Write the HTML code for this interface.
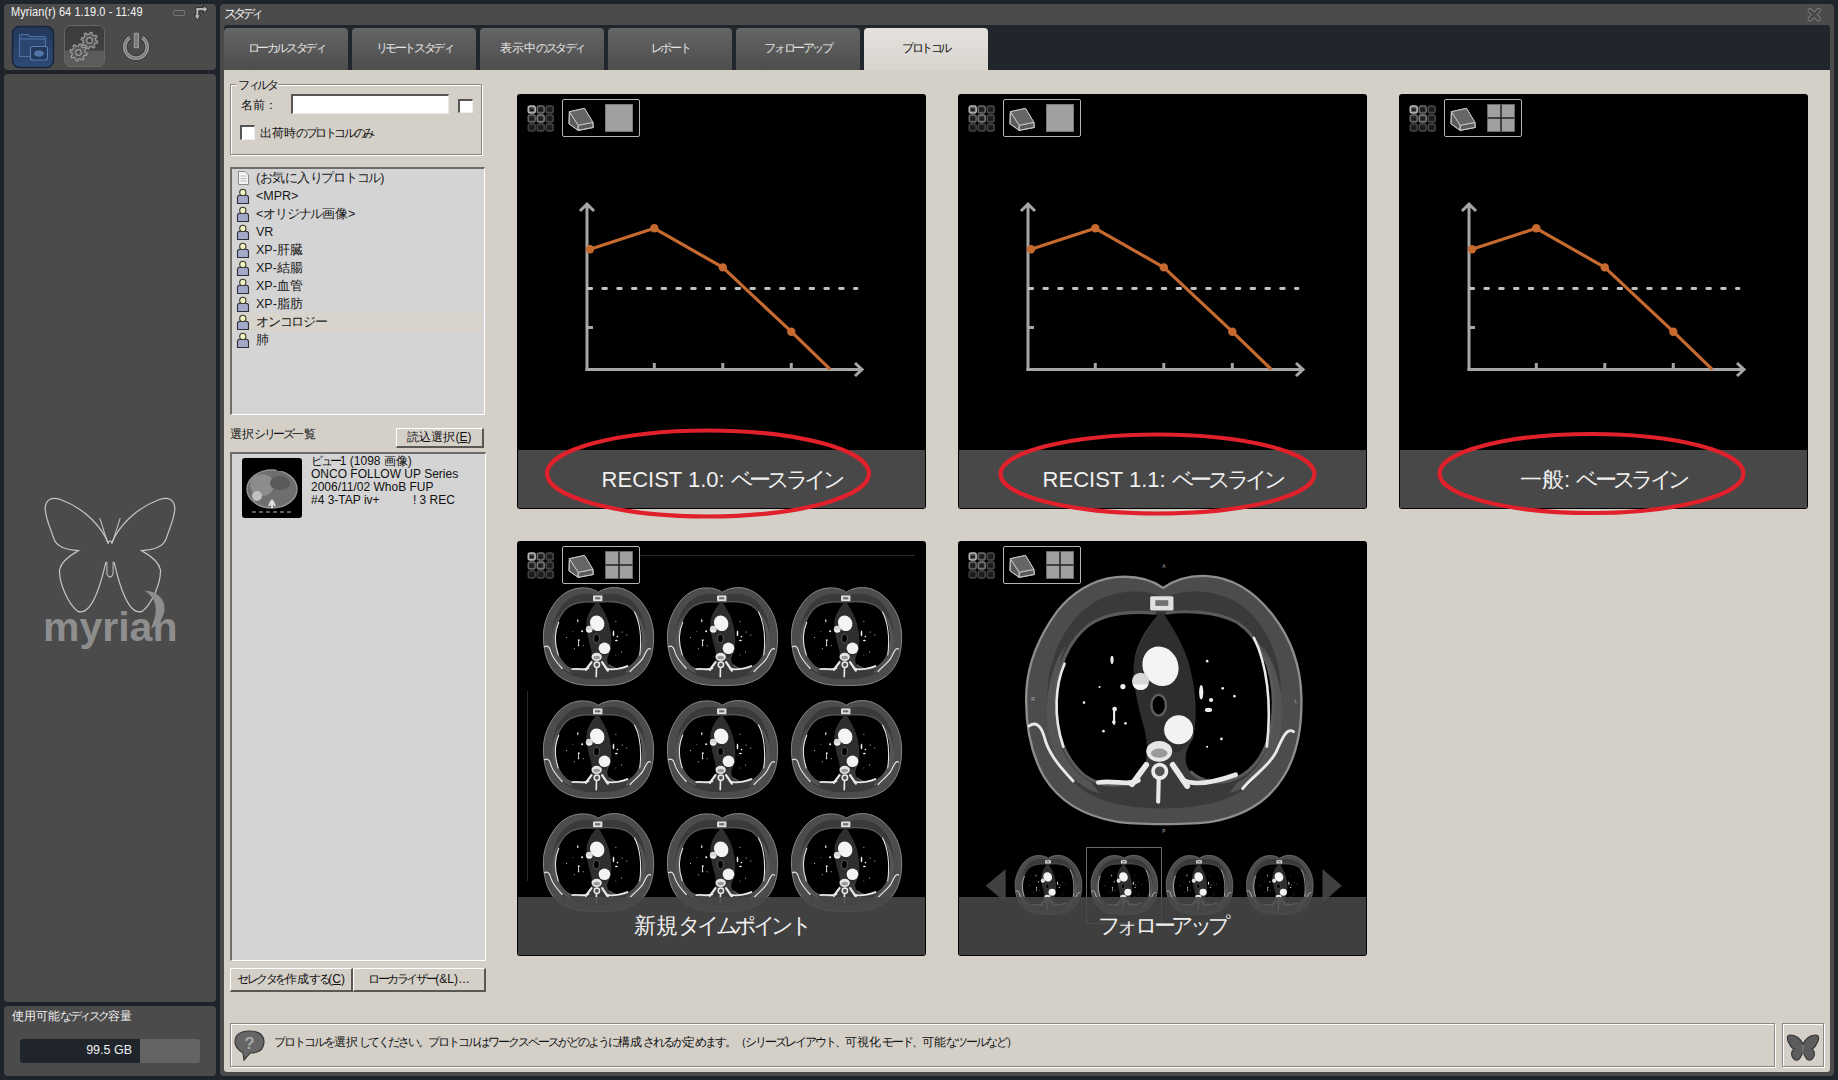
<!DOCTYPE html>
<html><head><meta charset="utf-8">
<style>
*{margin:0;padding:0;box-sizing:border-box}
html,body{width:1838px;height:1080px;overflow:hidden;background:#1f232a;font-family:"Liberation Sans",sans-serif}
.a{position:absolute}
.panel{position:absolute;background:#4b4b4b;border-radius:4px}
.tab{position:absolute;top:28px;width:124px;height:42px;border-radius:4px 4px 0 0;background:linear-gradient(180deg,#666 0%,#5a5a5a 45%,#4d4d4d 100%);color:#e6e6e6;font-size:12px;text-align:center;line-height:40px}
.tab.sel{background:linear-gradient(180deg,#e4e2dd 0%,#d8d5cf 100%);color:#111}
.etch{position:absolute;border:1px solid #8a8782;box-shadow:inset 1px 1px 0 #fff,1px 1px 0 #fff}
.sunk{position:absolute;background:#d4d4d4;border-top:2px solid #6e6c68;border-left:2px solid #6e6c68;border-right:1px solid #fff;border-bottom:1px solid #fff}
.btn{position:absolute;white-space:nowrap;background:#d4d0c8;border-top:1px solid #fff;border-left:1px solid #fff;border-right:2px solid #5a5854;border-bottom:2px solid #5a5854;font-size:12px;color:#111;text-align:center}
.card{position:absolute;width:409px;height:415px;background:#000;border-radius:3px;overflow:hidden}
.cap{position:absolute;left:1px;right:1px;bottom:1px;height:58px;background:rgba(72,72,72,.97);color:#f2f2f2;font-size:22px;text-align:center;line-height:60px}
.li{position:absolute;left:256px;font-size:12.5px;color:#1a1a1a;height:18px;line-height:18px}
.k{letter-spacing:-0.2em}
.k3{letter-spacing:-0.1em}
.k2{letter-spacing:-0.168em}
</style></head><body>
<!-- left sidebar -->
<div class="panel" style="left:4px;top:4px;width:212px;height:66px"></div>
<div class="panel" style="left:4px;top:74px;width:212px;height:928px"></div>
<div class="panel" style="left:4px;top:1006px;width:212px;height:70px"></div>

<div class="a" style="left:11px;top:5px;color:#f4f4f4;font-size:12px;letter-spacing:0.1px;transform:scaleX(0.915);transform-origin:0 0;white-space:nowrap">Myrian(r) 64 1.19.0 - 11:49</div>
<svg class="a" style="left:0;top:0" width="220" height="1080">
 <rect x="173.5" y="10.5" width="11" height="5" rx="1" fill="none" stroke="#777" stroke-width="1"/>
 <path d="M195.8,15 L194,15 L197.3,20.2 L200.6,15 L198.8,15 L198.8,10.8 L203.5,10.8 L203.5,13 L208,9.2 L203.5,5.5 L203.5,7.5 L195.8,7.5 Z" fill="#b4b4b4" stroke="#262626" stroke-width="0.9" stroke-linejoin="round"/>
 <defs>
  <linearGradient id="fg" x1="0" y1="0" x2="0" y2="1"><stop offset="0" stop-color="#22375a"/><stop offset="1" stop-color="#2e4a74"/></linearGradient>
  <linearGradient id="gg" x1="0" y1="0" x2="0" y2="1"><stop offset="0" stop-color="#3c3c3c"/><stop offset="0.6" stop-color="#404040"/><stop offset="0.62" stop-color="#5a5a5a"/><stop offset="1" stop-color="#5c5c5c"/></linearGradient>
 </defs>
 <rect x="12.5" y="26.5" width="41" height="41" rx="7" fill="url(#fg)" stroke="#18243a" stroke-width="1.5"/>
 <path d="M19.5,56.5 V36 Q19.5,34.5 21,34.5 H28 L30,36.5 H44 Q45.5,36.5 45.5,38 V56.5 Z" fill="#2c4670" stroke="#4f72a6" stroke-width="1.1"/>
 <path d="M19.5,39 H45.5" stroke="#4f72a6" stroke-width="1.1"/>
 <rect x="30.5" y="46.5" width="17" height="13.5" rx="2" fill="#22385a" stroke="#5a7fb5" stroke-width="1.1"/>
 <ellipse cx="39" cy="53.5" rx="5" ry="3.3" fill="#4f74a8"/>
 <rect x="64.5" y="25.5" width="40" height="41" rx="6" fill="url(#gg)" stroke="#666" stroke-width="1"/>
 <g fill="none" stroke="#9a9a9a" stroke-width="1.2">
  <path d="M95.90,40.50 L97.76,41.28 L97.35,43.19 L95.33,43.13 L94.03,45.03 L94.79,46.90 L93.15,47.95 L91.76,46.49 L89.50,46.90 L88.72,48.76 L86.81,48.35 L86.87,46.33 L84.97,45.03 L83.10,45.79 L82.05,44.15 L83.51,42.76 L83.10,40.50 L81.24,39.72 L81.65,37.81 L83.67,37.87 L84.97,35.97 L84.21,34.10 L85.85,33.05 L87.24,34.51 L89.50,34.10 L90.28,32.24 L92.19,32.65 L92.13,34.67 L94.03,35.97 L95.90,35.21 L96.95,36.85 L95.49,38.24 Z" fill="#575757"/><circle cx="89.5" cy="40.5" r="2.8" fill="#404040"/>
  <path d="M85.10,52.50 L87.06,53.31 L86.64,55.29 L84.52,55.22 L83.17,57.17 L83.98,59.13 L82.28,60.22 L80.83,58.67 L78.50,59.10 L77.69,61.06 L75.71,60.64 L75.78,58.52 L73.83,57.17 L71.87,57.98 L70.78,56.28 L72.33,54.83 L71.90,52.50 L69.94,51.69 L70.36,49.71 L72.48,49.78 L73.83,47.83 L73.02,45.87 L74.72,44.78 L76.17,46.33 L78.50,45.90 L79.31,43.94 L81.29,44.36 L81.22,46.48 L83.17,47.83 L85.13,47.02 L86.22,48.72 L84.67,50.17 Z" fill="#575757"/><circle cx="78.5" cy="52.5" r="2.8" fill="#505050"/>
 </g>
 <path d="M129.6,37.8 A11.2,11.2 0 1 0 142.4,37.8" fill="none" stroke="#383838" stroke-width="5.6"/>
 <path d="M129.6,37.8 A11.2,11.2 0 1 0 142.4,37.8" fill="none" stroke="#a0a0a0" stroke-width="3.8"/>
 <path d="M129.6,37.8 A11.2,11.2 0 1 0 142.4,37.8" fill="none" stroke="#707070" stroke-width="1.1"/>
 <rect x="133.2" y="32.2" width="6.2" height="16.6" fill="#383838"/>
 <rect x="134.2" y="33.2" width="4.2" height="14.6" fill="#7a7a7a" stroke="#a4a4a4" stroke-width="1"/>
 <g transform="translate(0,460) scale(0.2037)" fill="none" stroke="#c4c4c4" stroke-width="6">
  <path d="M533,410 C500,330 420,240 300,195 C250,178 225,195 222,235 C220,280 250,340 262,380 C275,430 330,440 385,445 C340,470 300,500 292,540 C290,600 330,700 380,742 C420,760 470,720 520,500"/>
  <path d="M547,410 C580,330 660,240 780,195 C830,178 855,195 858,235 C860,280 830,340 818,380 C805,430 750,440 695,445 C740,470 780,500 788,540 C790,600 750,700 700,742 C660,760 610,720 560,500"/>
  <path d="M528,405 L490,285 M552,405 L590,285" stroke-width="5"/>
  <path d="M528,410 Q540,385 552,410" />
  <path d="M525,500 L525,560 Q540,590 555,560 L555,500" stroke-width="5"/>
 </g>
 <path d="M144.6,590.4 C168,591.5 172,617 150.7,629.1 C158.5,611 158,600 144.6,590.4 Z" fill="#8e8e8e"/>
 <rect x="20" y="1039" width="180" height="24" rx="3" fill="#646464"/>
 <path d="M23,1039 H140 V1063 H23 Q20,1063 20,1060 V1042 Q20,1039 23,1039 Z" fill="#20242b"/>
</svg>
<div class="a" style="left:43px;top:604px;color:#8e8e8e;font-size:41px;font-weight:bold;letter-spacing:0px;white-space:nowrap">myrian</div>
<div class="a" style="left:12px;top:1008px;color:#f0f0f0;font-size:12px;letter-spacing:0px;white-space:nowrap">使用可能<span class="k">なディスク</span>容量</div>
<div class="a" style="left:20px;top:1043px;width:112px;text-align:right;color:#f0f0f0;font-size:12.5px;white-space:nowrap">99.5 GB</div>
<!-- right main -->
<div class="panel" style="left:220px;top:4px;width:1614px;height:1072px"></div>
<div class="a" style="left:224px;top:25px;width:1606px;height:45px;background:#21252c;border-radius:3px 3px 0 0"></div>
<div class="a" style="left:224px;top:70px;width:1606px;height:1002px;background:#d4d0c8;border-radius:0 0 3px 3px"></div>
<div class="a" style="left:224px;top:6px;color:#eee;font-size:12.5px"><span class="k" style="letter-spacing:-0.32em">スタディ</span></div>

<div class="tab" style="left:224px"><span class="k">ローカルスタディ</span></div>
<div class="tab" style="left:352px"><span class="k">リモートスタディ</span></div>
<div class="tab" style="left:480px">表示中<span class="k">のスタディ</span></div>
<div class="tab" style="left:608px"><span class="k">レポート</span></div>
<div class="tab" style="left:736px"><span class="k">フォローアップ</span></div>
<div class="tab sel" style="left:864px"><span class="k">プロトコル</span></div>

<!-- filter -->
<div class="etch" style="left:230px;top:84px;width:252px;height:71px"></div>
<div class="a" style="left:236px;top:77px;padding:0 2px;background:#d4d0c8;font-size:12px;color:#111"><span class="k">フィルタ</span></div>
<div class="a" style="left:241px;top:97px;font-size:12px;color:#111">名前<span class="k">：</span></div>
<div class="a" style="left:291px;top:94px;width:158px;height:20px;background:#fff;border-top:2px solid #555;border-left:2px solid #555;border-right:1px solid #e8e8e8;border-bottom:1px solid #e8e8e8"></div>
<div class="a" style="left:458px;top:99px;width:15px;height:14px;background:#fff;border-top:2px solid #555;border-left:2px solid #555;border-right:1px solid #eee;border-bottom:1px solid #eee"></div>
<div class="a" style="left:240px;top:125px;width:15px;height:15px;background:#fff;border-top:2px solid #555;border-left:2px solid #555;border-right:1px solid #eee;border-bottom:1px solid #eee"></div>
<div class="a" style="left:260px;top:125px;font-size:12px;color:#111">出荷時<span class="k">のプロトコルのみ</span></div>

<!-- protocol list -->
<div class="sunk" style="left:230px;top:167px;width:255px;height:248px"></div>
<div class="a" style="left:233px;top:313px;width:249px;height:18px;background:#d8d4cc"></div>
<svg class="a" style="left:0;top:0" width="1838" height="1080" viewBox="0 0 1838 1080">
<defs>
 <g id="person">
  <path d="M0.5,14.5 L0.5,8.5 Q0.5,6.2 3,6.2 L9,6.2 Q11.5,6.2 11.5,8.5 L11.5,14.5 Z" fill="#a4a8c8" stroke="#2e3040" stroke-width="1.1"/>
  <circle cx="5.8" cy="3.4" r="3.1" fill="#f2f2c4" stroke="#3a3a2a" stroke-width="1.1"/>
 </g>
 <g id="doc">
  <path d="M1.5 0.5 L8 0.5 L11.5 4 L11.5 13.5 L1.5 13.5 Z" fill="#f4f4f4" stroke="#8a8a8a"/>
  <path d="M3.5 5 H9.5 M3.5 7.5 H9.5 M3.5 10 H9.5" stroke="#bbb"/>
 </g>
</defs>
<use href="#doc" x="237" y="171"/>
<use href="#person" x="237" y="189"/>
<use href="#person" x="237" y="207"/>
<use href="#person" x="237" y="225"/>
<use href="#person" x="237" y="243"/>
<use href="#person" x="237" y="261"/>
<use href="#person" x="237" y="279"/>
<use href="#person" x="237" y="297"/>
<use href="#person" x="237" y="315"/>
<use href="#person" x="237" y="333"/>
</svg>
<div class="li" style="top:169px">(<span class="k3">お</span>気<span class="k3">に</span>入<span class="k3">りプロトコル</span>)</div>
<div class="li" style="top:187px">&lt;MPR&gt;</div>
<div class="li" style="top:205px">&lt;<span class="k3">オリジナル</span>画像&gt;</div>
<div class="li" style="top:223px">VR</div>
<div class="li" style="top:241px">XP-肝臓</div>
<div class="li" style="top:259px">XP-結腸</div>
<div class="li" style="top:277px">XP-血管</div>
<div class="li" style="top:295px">XP-脂肪</div>
<div class="li" style="top:313px"><span class="k3">オンコロジー</span></div>
<div class="li" style="top:331px">肺</div>

<div class="a" style="left:230px;top:426px;font-size:12px;color:#111">選択<span class="k">シリーズ</span>一覧</div>
<div class="btn" style="left:396px;top:428px;width:88px;height:20px;line-height:17px">読込選択(<u>E</u>)</div>
<div class="sunk" style="left:230px;top:452px;width:256px;height:509px"></div>
<div class="a" style="left:242px;top:458px;width:60px;height:60px;background:#000;border-radius:3px"></div>
<div class="a" style="left:311px;top:455px;font-size:12px;line-height:13px;color:#111;white-space:pre"><span class="k">ビュー</span>1 (1098 画像)
ONCO FOLLOW UP Series
2006/11/02 WhoB FUP
#4 3-TAP iv+          ! 3 REC</div>

<div class="btn" style="left:230px;top:968px;width:123px;height:24px;line-height:21px"><span class="k">セレクタを</span>作成<span class="k">する</span>(<u>C</u>)</div>
<div class="btn" style="left:353px;top:968px;width:133px;height:24px;line-height:21px"><span class="k">ローカライザー</span>(&amp;L)…</div>

<div class="etch" style="left:230px;top:1023px;width:1545px;height:44px"></div>
<div class="etch" style="left:1782px;top:1023px;width:42px;height:44px"></div>
<div class="a" style="left:274px;top:1034px;font-size:12px;color:#111;white-space:nowrap;letter-spacing:0.3px"><span class="k2">プロトコルを</span>選択<span class="k2">してください。プロトコルはワークスペースがどのように</span>構成<span class="k2">されるか</span>定<span class="k2">めます。（シリーズレイアウト、</span>可視化<span class="k2">モード、</span>可能<span class="k2">なツールなど）</span></div>
<svg class="a" style="left:0;top:0" width="1838" height="1080" viewBox="0 0 1838 1080">
<defs>
 <g id="hdr">
  <g stroke-width="1.4">
   <rect x="11.2" y="12.0" width="7" height="7" rx="2" fill="#5a5a5a" stroke="#bdbdbd"/><rect x="13.0" y="14.6" width="3.6" height="2.4" fill="#1a1a1a"/>
   <rect x="20.2" y="12.0" width="7" height="7" rx="2" fill="#2a2a2a" stroke="#6e6e6e"/><rect x="22.0" y="14.6" width="3.6" height="2.4" fill="#1a1a1a"/>
   <rect x="29.2" y="12.0" width="7" height="7" rx="2" fill="#222" stroke="#4a4a4a"/><rect x="31.0" y="14.6" width="3.6" height="2.4" fill="#1a1a1a"/>
   <rect x="11.2" y="21.0" width="7" height="7" rx="2" fill="#2a2a2a" stroke="#6a6a6a"/><rect x="13.0" y="23.6" width="3.6" height="2.4" fill="#1a1a1a"/>
   <rect x="20.2" y="21.0" width="7" height="7" rx="2" fill="#333" stroke="#808080"/><rect x="22.0" y="23.6" width="3.6" height="2.4" fill="#1a1a1a"/>
   <rect x="29.2" y="21.0" width="7" height="7" rx="2" fill="#222" stroke="#4a4a4a"/><rect x="31.0" y="23.6" width="3.6" height="2.4" fill="#1a1a1a"/>
   <rect x="11.2" y="30.0" width="7" height="7" rx="2" fill="#1e1e1e" stroke="#444"/><rect x="13.0" y="32.6" width="3.6" height="2.4" fill="#1a1a1a"/>
   <rect x="20.2" y="30.0" width="7" height="7" rx="2" fill="#1e1e1e" stroke="#484848"/><rect x="22.0" y="32.6" width="3.6" height="2.4" fill="#1a1a1a"/>
   <rect x="29.2" y="30.0" width="7" height="7" rx="2" fill="#1e1e1e" stroke="#484848"/><rect x="31.0" y="32.6" width="3.6" height="2.4" fill="#1a1a1a"/>
  </g>
  <rect x="45.5" y="5.5" width="77" height="37" rx="1.5" fill="none" stroke="#b4b4b4" stroke-width="1"/>
  <path d="M52.4 17.7 L67.5 14.4 L75.9 28.4 L76.3 33.5 L61.2 36.4 L52 29.8 Z" fill="#5a5a5a" stroke="#c4c4c4" stroke-width="1"/>
  <path d="M52.4 17.7 L61.2 31.3 L75.9 28.4 M61.2 31.3 L61.2 36.4" fill="none" stroke="#c4c4c4" stroke-width="1"/>
  <path d="M52.4 17.7 L67.5 14.4 L75.9 28.4 L61.2 31.3 Z" fill="#666"/>
  <path d="M52.4 17.7 L67.5 14.4 L75.9 28.4 L76.3 33.5 L61.2 36.4 L52 29.8 Z M52.4 17.7 L61.2 31.3 L75.9 28.4 M61.2 31.3 L61.2 36.4" fill="none" stroke="#c4c4c4" stroke-width="1"/>
 </g>
 <g id="sq1"><rect x="88.5" y="10.5" width="27" height="27" fill="#a0a0a0" stroke="#7a7a7a"/></g>
 <g id="sq4"><rect x="88.5" y="10.5" width="27" height="27" fill="#a0a0a0" stroke="#6a6a6a"/><path d="M102 10.5 V37.5 M88.5 24 H115.5" stroke="#222" stroke-width="1.5"/></g>

 <g id="ct">
  <path d="M575,108 C530,75 470,60 395,66 C300,75 220,130 165,200 C100,290 55,390 48,500 C42,620 62,740 115,835 C170,925 260,985 390,1008 C470,1022 680,1022 770,1008 C890,985 985,925 1040,835 C1095,745 1112,640 1108,520 C1104,400 1065,300 1000,215 C935,130 850,68 745,62 C670,58 615,80 575,108 Z" fill="#4c4c4c" stroke="#8e8e8e" stroke-width="9"/>
  <path d="M578,150 C520,112 420,112 330,152 C232,200 152,320 132,470 C118,620 152,760 232,858 C300,928 420,958 572,958 C722,958 850,928 918,858 C998,760 1032,620 1028,470 C1014,320 938,200 838,152 C750,112 640,112 578,150 Z" fill="#3a3a3a"/>
  <path d="M200,330 C160,420 150,560 175,690 C190,760 230,820 300,860 L330,900 C250,880 170,800 140,700 C110,580 130,420 200,330 Z" fill="#545454"/>
  <path d="M955,330 C1000,420 1010,560 985,690 C970,760 930,820 860,860 L830,900 C910,880 990,800 1020,700 C1050,580 1030,420 955,330 Z" fill="#545454"/>
  <path d="M555,205 C530,260 470,320 460,420 C455,520 490,600 505,690 L515,740 L640,740 C665,720 695,690 705,600 C710,500 690,400 650,320 C610,260 585,230 580,205 Z" fill="#2e2e2e"/>
  <path d="M548,205 C470,198 360,200 290,250 C210,310 165,420 160,530 C155,650 190,760 270,830 C340,880 430,880 480,840 C515,800 520,730 505,660 C482,575 455,480 462,400 C470,320 515,260 552,215 Z" fill="#000"/>
  <path d="M585,205 C650,195 780,195 860,240 C950,300 1000,420 1000,550 C1000,680 960,780 880,830 C810,870 730,865 680,815 C650,780 660,730 690,690 C710,600 700,500 680,420 C660,330 610,260 582,215 Z" fill="#000"/>
  <path d="M548,205 C470,198 360,200 290,250 C210,310 165,420 160,530 C155,650 190,760 270,830 C340,880 430,880 480,840 M585,205 C650,195 780,195 860,240 C950,300 1000,420 1000,550 C1000,680 960,780 880,830 C810,870 730,865 680,815" fill="none" stroke="#5a5a5a" stroke-width="12"/>
  <g fill="none" stroke="#e8e8e8" stroke-linecap="round">
   <path d="M195,400 C160,480 150,600 190,720" stroke-width="10"/>
   <path d="M925,300 C975,400 995,550 975,720" stroke-width="10"/>
   <path d="M325,858 C390,848 440,872 480,850 M650,850 C700,872 770,858 855,828" stroke-width="18"/>
   <path d="M510,790 L455,865 M612,790 L668,872" stroke-width="22"/>
   <path d="M558,850 L556,932" stroke-width="16"/>
   <path d="M58,640 C95,615 112,660 122,700 C142,760 190,812 228,852" stroke-width="11"/>
   <path d="M1078,662 C1050,642 1030,700 1010,742 C980,800 920,832 882,882" stroke-width="11"/>
  </g>
  <rect x="525" y="140" width="90" height="55" rx="6" fill="#e0e0e0"/>
  <rect x="545" y="155" width="50" height="22" fill="#707070"/>
  <ellipse cx="565" cy="410" rx="68" ry="78" transform="rotate(-25 565 410)" fill="#f4f4f4"/>
  <circle cx="488" cy="468" r="33" fill="#d8d8d8"/>
  <path d="M458,480 A32,32 0 0 0 518,480 Z" fill="#f8f8f8"/>
  <ellipse cx="558" cy="560" rx="28" ry="40" fill="#000" stroke="#5e5e5e" stroke-width="9"/>
  <circle cx="635" cy="655" r="56" fill="#f2f2f2"/>
  <ellipse cx="560" cy="738" rx="50" ry="40" fill="#e6e6e6"/>
  <ellipse cx="560" cy="745" rx="32" ry="18" fill="#9a9a9a"/>
  <circle cx="562" cy="815" r="26" fill="#555" stroke="#ececec" stroke-width="14"/>
  <g fill="#eee">
   <ellipse cx="378" cy="385" rx="6" ry="16"/><circle cx="420" cy="488" r="10"/><circle cx="388" cy="575" r="9"/><rect x="382" y="580" width="8" height="55"/><circle cx="385" cy="625" r="7"/>
   <ellipse cx="722" cy="510" rx="8" ry="28"/><circle cx="760" cy="540" r="8"/><ellipse cx="750" cy="578" rx="14" ry="8"/><circle cx="805" cy="495" r="5"/>
   <circle cx="270" cy="550" r="5"/><circle cx="345" cy="660" r="5"/><circle cx="745" cy="390" r="5"/><circle cx="850" cy="525" r="5"/>
   <circle cx="430" cy="630" r="5"/><circle cx="330" cy="490" r="4"/><circle cx="800" cy="690" r="5"/><circle cx="745" cy="720" r="4"/>
  </g>
 </g>
 <g id="chart">
  <g stroke="#a6a6a6" stroke-width="3" fill="none" stroke-linecap="butt">
   <path d="M70 110 V277 M63 117 L70 110 L77 117"/>
   <path d="M68.5 275.6 H345 M338 269 L345 275.6 L338 282"/>
   <path d="M137.3 269 V275 M205.8 269 V275 M274.3 269 V275 M70 233.4 H76"/>
  </g>
  <path d="M71 194.5 H340" stroke="#c0c0c0" stroke-width="2.8" stroke-dasharray="3.7 11.1" stroke-linecap="round"/>
  <polyline points="73,155.3 137.3,134.3 205.8,173.4 274.3,237.7 313.2,275.3" fill="none" stroke="#c66a30" stroke-width="3.2" stroke-linejoin="round"/>
  <g fill="#c66a30"><circle cx="73" cy="155.3" r="4.2"/><circle cx="137.3" cy="134.3" r="4.2"/><circle cx="205.8" cy="173.4" r="4.2"/><circle cx="274.3" cy="237.7" r="4.2"/></g>
 </g>
</defs>
<g transform="translate(517,94)"><rect x="0" y="0" width="409" height="415" rx="3" fill="#000"/><use href="#chart"/><use href="#hdr"/><use href="#sq1"/></g>
<g transform="translate(958,94)"><rect x="0" y="0" width="409" height="415" rx="3" fill="#000"/><use href="#chart"/><use href="#hdr"/><use href="#sq1"/></g>
<g transform="translate(1399,94)"><rect x="0" y="0" width="409" height="415" rx="3" fill="#000"/><use href="#chart"/><use href="#hdr"/><use href="#sq4"/></g>
<rect x="518" y="450" width="407" height="58" fill="#484848"/><rect x="959" y="450" width="407" height="58" fill="#484848"/><rect x="1400" y="450" width="407" height="58" fill="#484848"/><g transform="translate(517,541)"><rect x="0" y="0" width="409" height="415" rx="3" fill="#000"/><use href="#ct" transform="translate(21.55,40.26) scale(0.1038,0.1024)"/><use href="#ct" transform="translate(145.55,40.26) scale(0.1038,0.1024)"/><use href="#ct" transform="translate(269.55,40.26) scale(0.1038,0.1024)"/><use href="#ct" transform="translate(21.55,153.26) scale(0.1038,0.1024)"/><use href="#ct" transform="translate(145.55,153.26) scale(0.1038,0.1024)"/><use href="#ct" transform="translate(269.55,153.26) scale(0.1038,0.1024)"/><use href="#ct" transform="translate(21.55,266.26) scale(0.1038,0.1024)"/><use href="#ct" transform="translate(145.55,266.26) scale(0.1038,0.1024)"/><use href="#ct" transform="translate(269.55,266.26) scale(0.1038,0.1024)"/><path d="M123,14.5 H398 M10.5,150 V340" stroke="#2a2a2a" stroke-width="1"/><use href="#hdr"/><use href="#sq4"/><rect x="1" y="356" width="407" height="58" fill="#484848" fill-opacity="0.9"/></g>
<g transform="translate(958,541)"><rect x="0" y="0" width="409" height="415" rx="3" fill="#000"/><use href="#ct" transform="translate(56,19) scale(0.2593)"/><use href="#ct" transform="translate(54.2,310.5) scale(0.0628,0.0621)"/><use href="#ct" transform="translate(130,310.5) scale(0.0628,0.0621)"/><use href="#ct" transform="translate(205.2,310.5) scale(0.0628,0.0621)"/><use href="#ct" transform="translate(285.5,310.5) scale(0.0628,0.0621)"/><g font-family="Liberation Sans" font-size="5" fill="#aaa" text-anchor="middle"><text x="206" y="27">A</text><text x="206" y="292">P</text><text x="75" y="160">R</text><text x="338" y="162">L</text></g><rect x="128.5" y="306.5" width="75" height="76" fill="none" stroke="#6a6a6a"/><path d="M27.7,344.8 L47.7,328 L47.7,361.5 Z" fill="#404040"/><path d="M383.9,344.8 L364.5,328 L364.5,361.5 Z" fill="#404040"/><use href="#hdr"/><use href="#sq4"/><rect x="1" y="356" width="407" height="58" fill="#484848" fill-opacity="0.88"/></g>
</svg>
<svg class="a" style="left:0;top:0" width="1838" height="1080">
 <g fill="none" stroke="#e0202a" stroke-width="4.2">
  <ellipse cx="708" cy="473.5" rx="161" ry="43"/>
  <ellipse cx="1157.5" cy="474" rx="157" ry="39.5"/>
  <ellipse cx="1591.5" cy="473.5" rx="152" ry="39.5"/>
 </g>
</svg>
<div class="a" style="left:517px;top:465px;width:409px;text-align:center;color:#f0f0f0;font-size:22px">RECIST 1.0: <span class="k">ベースライン</span></div>
<div class="a" style="left:958px;top:465px;width:409px;text-align:center;color:#f0f0f0;font-size:22px">RECIST 1.1: <span class="k">ベースライン</span></div>
<div class="a" style="left:1399px;top:465px;width:409px;text-align:center;color:#f0f0f0;font-size:22px">一般: <span class="k">ベースライン</span></div>
<div class="a" style="left:517px;top:911px;width:409px;text-align:center;color:#f0f0f0;font-size:22px">新規<span class="k">タイムポイント</span></div>
<div class="a" style="left:958px;top:911px;width:409px;text-align:center;color:#f0f0f0;font-size:22px"><span class="k">フォローアップ</span></div>

<svg class="a" style="left:0;top:0" width="1838" height="1080">
 <path d="M1810,10.5 L1818.5,19 M1818.5,10.5 L1810,19" stroke="#7a7a7a" stroke-width="5" stroke-linecap="round"/><path d="M1810,10.5 L1818.5,19 M1818.5,10.5 L1810,19" stroke="#484848" stroke-width="3" stroke-linecap="round"/>
 <g>
  <path d="M243,1053 Q235,1048 235,1042 Q235,1031 249.5,1031 Q264,1031 264,1042 Q264,1053 250,1053 L244,1060 Z" fill="#666" stroke="#3a3a3a" stroke-width="1.2"/>
  <text x="249.5" y="1048.5" font-family="Liberation Sans" font-weight="bold" font-size="17" fill="#a8a8a8" text-anchor="middle">?</text>
 </g>
 <g transform="translate(1803,1047)">
  <path d="M0,-3 C-3,-9 -8,-12 -13,-12 C-16,-12 -16,-9 -15,-6 C-13,-2 -12,1 -9,2 C-12,4 -12,8 -10,11 C-8,14 -5,14 -3,11 C-1,8 0,5 0,3 C0,5 1,8 3,11 C5,14 8,14 10,11 C12,8 12,4 9,2 C12,1 13,-2 15,-6 C16,-9 16,-12 13,-12 C8,-12 3,-9 0,-3 Z" fill="#5c5c5c" stroke="#333" stroke-width="1.2"/>
  <path d="M0,-2 L0,8" stroke="#8a8a8a" stroke-width="1"/>
 </g>
 <g transform="translate(242,458)">
  <ellipse cx="30" cy="31" rx="25" ry="19" fill="#6e6e6e" stroke="#909090" stroke-width="1.5"/>
  <ellipse cx="20" cy="27" rx="12" ry="11" fill="#8c8c8c"/>
  <ellipse cx="38" cy="25" rx="10" ry="7" fill="#5a5a5a"/>
  <circle cx="15" cy="38" r="5" fill="#c0c0c0"/>
  <path d="M30,42 L27,48 M30,42 L33,48 M30,42 V50" stroke="#ddd" stroke-width="2"/>
  <path d="M10,54 H50" stroke="#bbb" stroke-width="1" stroke-dasharray="4 3"/>
  <ellipse cx="38" cy="11" rx="4" ry="2" fill="#000"/>
 </g>
</svg>
</body></html>
